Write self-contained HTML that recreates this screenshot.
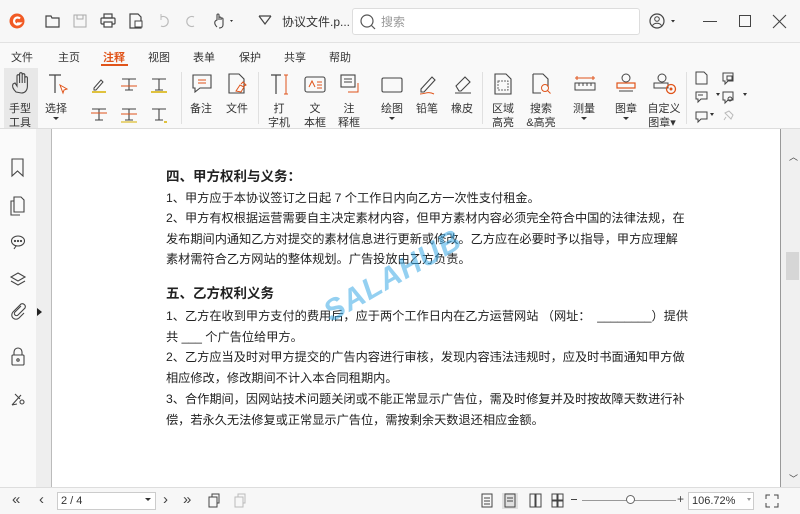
<!DOCTYPE html>
<html><head><meta charset="utf-8"><style>
*{margin:0;padding:0;box-sizing:border-box}
body{width:800px;height:514px;overflow:hidden;background:#f3f3f3;font-family:"Liberation Sans","Noto Sans CJK SC",sans-serif;position:relative;color:#333}
.a{position:absolute}
.t{position:absolute;font-size:11px;color:#333;white-space:nowrap;transform:translateX(-50%)}
.p{position:absolute;left:166px;font-size:12.2px;color:#222;white-space:nowrap;line-height:16px}
.h{font-weight:bold;font-size:13.5px}
svg{position:absolute;overflow:visible}
</style></head><body>
<div class="a" style="left:0;top:0;width:800px;height:42px;background:#f7f7f7"></div>
<div class="a" style="left:0;top:42px;width:800px;height:1px;background:#e2e2e2"></div>
<svg style="left:9px;top:13px" width="16" height="16"><circle cx="8" cy="8" r="7.5" fill="#f15a24"/><path d="M11 5.5A3.5 3.5 0 1 0 11 10.5H8" stroke="#fff" stroke-width="2.2" fill="none"/></svg>
<svg style="left:45px;top:14px" width="16" height="14"><path d="M1 2h5l1 2h7v9H1z" fill="none" stroke="#444" stroke-width="1.2"/></svg>
<svg style="left:73px;top:14px" width="14" height="14"><rect x="1" y="1" width="12" height="12" fill="none" stroke="#aaa"/><rect x="4" y="1" width="6" height="4" fill="none" stroke="#aaa"/></svg>
<svg style="left:100px;top:13px" width="16" height="15"><rect x="4" y="1" width="8" height="4" fill="none" stroke="#444" stroke-width="1.2"/><rect x="1" y="5" width="14" height="6" rx="1" fill="none" stroke="#444" stroke-width="1.2"/><rect x="4" y="9" width="8" height="5" fill="#fff" stroke="#444" stroke-width="1.2"/></svg>
<svg style="left:129px;top:13px" width="14" height="16"><path d="M1 1h8l3 3v11H1z" fill="none" stroke="#444" stroke-width="1.2"/><rect x="6" y="8" width="7" height="6" fill="#fff" stroke="#444"/></svg>
<svg style="left:157px;top:14px" width="12" height="14"><path d="M4 3a5 5 0 1 1 0 9" fill="none" stroke="#bbb" stroke-width="1.2"/><path d="M4 0v6" stroke="#bbb"/></svg>
<svg style="left:185px;top:14px" width="12" height="14"><path d="M9 3a5 5 0 1 0 0 9" fill="none" stroke="#bbb" stroke-width="1.2"/></svg>
<svg style="left:212px;top:12px" width="24" height="18"><path d="M5 15c-3-3-3-6 0-7V3a1 1 0 0 1 2 0v5M7 6a1 1 0 0 1 2 0v2M9 7a1 1 0 0 1 2 0v6c0 2-2 3-4 3" fill="none" stroke="#444" stroke-width="1.1"/><path d="M18 8l3 0-1.5 2z" fill="#333"/></svg>
<svg style="left:258px;top:15px" width="14" height="10"><path d="M1 1h12M1 1l6 8 6-8" fill="none" stroke="#444" stroke-width="1.2"/></svg>
<div class="a" style="left:282px;top:13px;font-size:12px;color:#333">协议文件.p...</div>
<div class="a" style="left:352px;top:8px;width:288px;height:27px;background:#fff;border:1px solid #ddd;border-radius:3px"></div>
<svg style="left:360px;top:14px" width="16" height="16"><circle cx="7" cy="7" r="6" fill="none" stroke="#555" stroke-width="1.2"/><path d="M11 11l4 4" stroke="#555" stroke-width="1.2"/></svg>
<div class="a" style="left:381px;top:13px;font-size:12px;color:#999">搜索</div>
<svg style="left:649px;top:13px" width="26" height="16"><circle cx="8" cy="8" r="7" fill="none" stroke="#444" stroke-width="1.2"/><circle cx="8" cy="6" r="2.3" fill="none" stroke="#444"/><path d="M3.5 12.5c2-3 7-3 9 0" fill="none" stroke="#444"/><path d="M22 7h4l-2 2.5z" fill="#333"/></svg>
<div class="a" style="left:703px;top:21px;width:14px;height:1px;background:#444"></div>
<div class="a" style="left:739px;top:15px;width:12px;height:12px;border:1.2px solid #444"></div>
<svg style="left:773px;top:15px" width="13" height="13"><path d="M0 0l13 13M13 0L0 13" stroke="#444" stroke-width="1.1"/></svg>
<div class="a" style="left:0;top:43px;width:800px;height:85px;background:#f9f9f9"></div>
<div class="t" style="left:22px;top:49px">文件</div>
<div class="t" style="left:69px;top:49px">主页</div>
<div class="t" style="left:114px;top:49px;color:#e0541a;font-weight:bold">注释</div>
<div class="a" style="left:101px;top:64px;width:27px;height:2px;background:#e0541a"></div>
<div class="t" style="left:159px;top:49px">视图</div>
<div class="t" style="left:204px;top:49px">表单</div>
<div class="t" style="left:250px;top:49px">保护</div>
<div class="t" style="left:295px;top:49px">共享</div>
<div class="t" style="left:340px;top:49px">帮助</div>
<div class="a" style="left:4px;top:68px;width:34px;height:60px;background:#e8e8e8"></div>
<svg style="left:11px;top:72px" width="22" height="22"><path d="M5 20c-3-3-4-6-3-8l2-1 2 3V4a1.3 1.3 0 0 1 2.6 0v7V2a1.3 1.3 0 0 1 2.6 0v9V3a1.3 1.3 0 0 1 2.6 0v8V6a1.3 1.3 0 0 1 2.6 0v8c0 4-2 7-6 7z" fill="none" stroke="#444" stroke-width="1.1"/></svg>
<div class="t" style="left:20px;top:100px">手型</div><div class="t" style="left:20px;top:114px">工具</div>
<svg style="left:47px;top:74px" width="22" height="22"><path d="M2 1h12M8 1v18" stroke="#444" stroke-width="1.2"/><path d="M13 11l7 4-3 1-1 3z" fill="#fff" stroke="#e0541a"/></svg>
<div class="t" style="left:56px;top:100px">选择</div><div class="a" style="left:53px;top:117px;border:3px solid transparent;border-top:3px solid #333"></div>
<svg style="left:92px;top:77px" width="14" height="16"><path d="M2 11l7-8 2 2-7 8H2z" fill="none" stroke="#444"/><path d="M0 15h14" stroke="#d8b000" stroke-width="1.5"/></svg>
<svg style="left:121px;top:77px" width="16" height="16"><path d="M1 2h14M8 2v11M4 13h8" stroke="#444" stroke-width="1.1"/><path d="M0 9h16" stroke="#e0541a"/></svg>
<svg style="left:151px;top:77px" width="16" height="16"><path d="M1 2h14M8 2v11M4 13h8" stroke="#444" stroke-width="1.1"/><path d="M0 15h16" stroke="#d8b000" stroke-width="1.5"/></svg>
<svg style="left:91px;top:107px" width="16" height="16"><path d="M1 2h14M8 2v11M4 13h8" stroke="#444" stroke-width="1.1"/><path d="M0 6h16" stroke="#e0541a"/></svg>
<svg style="left:121px;top:107px" width="16" height="16"><path d="M1 2h14M8 2v11M4 13h8" stroke="#444" stroke-width="1.1"/><path d="M0 7h16" stroke="#e0541a"/><path d="M0 15h16" stroke="#d8b000"/></svg>
<svg style="left:151px;top:107px" width="16" height="16"><path d="M1 2h14M8 2v11M4 13h8" stroke="#444" stroke-width="1.1"/><path d="M13 15h3" stroke="#d8b000" stroke-width="1.5"/></svg>
<div class="a" style="left:181px;top:72px;width:1px;height:52px;background:#e0e0e0"></div>
<svg style="left:192px;top:74px" width="20" height="20"><path d="M1 1h18v13H8l-5 4v-4H1z" fill="none" stroke="#444" stroke-width="1.1"/><path d="M6 6h8M6 9h8" stroke="#e0541a"/></svg>
<div class="t" style="left:201px;top:100px">备注</div>
<svg style="left:228px;top:73px" width="20" height="22"><path d="M1 1h10l5 5v14H1z" fill="none" stroke="#444" stroke-width="1.1"/><path d="M8 18l4-6 4 2-3 5zM13 11l2-2 3 3-2 1" fill="none" stroke="#e0541a"/></svg>
<div class="t" style="left:237px;top:100px">文件</div>
<div class="a" style="left:258px;top:72px;width:1px;height:52px;background:#e0e0e0"></div>
<svg style="left:270px;top:74px" width="20" height="22"><path d="M1 1h10M6 1v19" stroke="#444" stroke-width="1.2"/><path d="M16 1v19M14 1h4M14 20h4" stroke="#e0541a"/></svg>
<div class="t" style="left:279px;top:100px">打</div><div class="t" style="left:279px;top:114px">字机</div>
<svg style="left:304px;top:76px" width="22" height="18"><rect x="1" y="1" width="20" height="15" rx="2" fill="none" stroke="#444" stroke-width="1.1"/><path d="M5 11l3-6 3 6M13 6h5M13 9h5M13 12h5" fill="none" stroke="#e0541a"/></svg>
<div class="t" style="left:315px;top:100px">文</div><div class="t" style="left:315px;top:114px">本框</div>
<svg style="left:340px;top:74px" width="22" height="22"><rect x="1" y="1" width="14" height="12" fill="none" stroke="#444" stroke-width="1.1"/><path d="M4 5h8M4 8h8" stroke="#444"/><path d="M18 9v9H8" fill="none" stroke="#e0541a"/></svg>
<div class="t" style="left:349px;top:100px">注</div><div class="t" style="left:349px;top:114px">释框</div>
<svg style="left:381px;top:77px" width="22" height="16"><rect x="1" y="1" width="20" height="14" rx="1.5" fill="none" stroke="#444" stroke-width="1.1"/></svg>
<div class="t" style="left:392px;top:100px">绘图</div><div class="a" style="left:389px;top:117px;border:3px solid transparent;border-top:3px solid #333"></div>
<svg style="left:418px;top:74px" width="20" height="22"><path d="M3 15L14 3l3 3L6 18H3z" fill="none" stroke="#444" stroke-width="1.1"/><path d="M2 20c5 0 8-3 14 0" fill="none" stroke="#e0541a"/></svg>
<div class="t" style="left:427px;top:100px">铅笔</div>
<svg style="left:453px;top:74px" width="20" height="20"><path d="M3 12L12 3l5 5-9 9H6z" fill="none" stroke="#444" stroke-width="1.1"/><path d="M2 19h16" stroke="#444"/></svg>
<div class="t" style="left:462px;top:100px">橡皮</div>
<div class="a" style="left:482px;top:72px;width:1px;height:52px;background:#e0e0e0"></div>
<svg style="left:494px;top:73px" width="18" height="22"><path d="M1 1h11l5 5v15H1z" fill="none" stroke="#444" stroke-width="1.1"/><rect x="4" y="8" width="10" height="9" fill="none" stroke="#666" stroke-dasharray="2 1"/></svg>
<div class="t" style="left:503px;top:100px">区域</div><div class="t" style="left:503px;top:114px">高亮</div>
<svg style="left:532px;top:73px" width="20" height="22"><path d="M1 1h10l5 5v8M9 20H1V1" fill="none" stroke="#444" stroke-width="1.1"/><circle cx="13" cy="15" r="3.5" fill="none" stroke="#e0541a"/><path d="M15.5 17.5l3 3" stroke="#e0541a"/></svg>
<div class="t" style="left:541px;top:100px">搜索</div><div class="t" style="left:541px;top:114px">&amp;高亮</div>
<svg style="left:574px;top:76px" width="22" height="16"><path d="M1 2h20M3 0v4M19 0v4" stroke="#e0541a"/><rect x="1" y="7" width="20" height="7" fill="none" stroke="#444"/><path d="M5 7v3M9 7v3M13 7v3M17 7v3" stroke="#444"/></svg>
<div class="t" style="left:584px;top:100px">测量</div><div class="a" style="left:581px;top:117px;border:3px solid transparent;border-top:3px solid #333"></div>
<svg style="left:615px;top:73px" width="22" height="22"><circle cx="11" cy="5" r="4" fill="none" stroke="#444"/><rect x="2" y="10" width="18" height="5" fill="none" stroke="#e0541a" stroke-width="1.2"/><path d="M4 18h14" stroke="#444"/></svg>
<div class="t" style="left:626px;top:100px">图章</div><div class="a" style="left:623px;top:117px;border:3px solid transparent;border-top:3px solid #333"></div>
<svg style="left:653px;top:73px" width="24" height="22"><circle cx="9" cy="5" r="4" fill="none" stroke="#444"/><rect x="1" y="10" width="14" height="5" fill="none" stroke="#444"/><circle cx="18" cy="16" r="4.5" fill="none" stroke="#e0541a" stroke-width="1.3"/><circle cx="18" cy="16" r="1.5" fill="#e0541a"/></svg>
<div class="t" style="left:664px;top:100px">自定义</div><div class="t" style="left:662px;top:114px">图章▾</div>
<div class="a" style="left:686px;top:72px;width:1px;height:52px;background:#e0e0e0"></div>
<svg style="left:695px;top:71px" width="50" height="58" fill="none" stroke="#444" stroke-width="1"><path d="M1 1h8l3 3v9H1z"/><path d="M28 2h10v8h-5l-3 3v-3h-2z"/><rect x="32" y="5" width="5" height="4"/><path d="M1 21h11v7H6l-3 3v-3H1z"/><path d="M3 24h5"/><path d="M28 21h10v8h-5l-3 3v-3h-2z"/><circle cx="35" cy="28" r="2"/><path d="M1 41h11v7H6l-3 3v-3H1z"/><path d="M30 42l4-2 4 4-2 4zM31 46l-2 3" stroke="#bbb"/></svg>
<div class="a" style="left:716px;top:93px;border:2.5px solid transparent;border-top:3px solid #333"></div>
<div class="a" style="left:743px;top:93px;border:2.5px solid transparent;border-top:3px solid #333"></div>
<div class="a" style="left:710px;top:113px;border:2.5px solid transparent;border-top:3px solid #333"></div>
<div class="a" style="left:0;top:128px;width:800px;height:1px;background:#ddd"></div>
<div class="a" style="left:0;top:129px;width:36px;height:358px;background:#fafafa"></div>
<div class="a" style="left:36px;top:129px;width:16px;height:358px;background:#eeeeee"></div>
<div class="a" style="left:51px;top:129px;width:1px;height:358px;background:#bbb"></div>
<svg style="left:10px;top:158px" width="16" height="280" fill="none" stroke="#444" stroke-width="1.1">
<path d="M2 1h11v17l-5.5-5L2 18z"/>
<path d="M4 39h7l3 3v12H4z"/><path d="M4 43H1v14h9"/>
<ellipse cx="8" cy="83" rx="6.5" ry="5"/><path d="M6 88l-2 3"/><circle cx="5" cy="83" r=".6"/><circle cx="8" cy="83" r=".6"/><circle cx="11" cy="83" r=".6"/>
<path d="M8 115l7 4-7 4-7-4z"/><path d="M1 123l7 4 7-4"/>
<path d="M11 148l-6 6a2 2 0 0 0 3 3l7-7a3 3 0 0 0-4-4l-8 8a4 4 0 0 0 6 6l5-5"/>
<rect x="2" y="197" width="12" height="10" rx="1"/><path d="M4 197v-3a4 4 0 0 1 8 0v3"/><circle cx="8" cy="202" r="1.2"/>
<path d="M2 247l9-10M5 236l5 5M2 247l5-1"/><circle cx="12" cy="244" r="2"/>
</svg>
<div class="a" style="left:37px;top:308px;border:4px solid transparent;border-left:5px solid #222"></div>
<div class="a" style="left:52px;top:129px;width:730px;height:358px;background:#fff"></div>
<div class="p h" style="top:169px">四、甲方权利与义务：</div>
<div class="p" style="top:190px">1、甲方应于本协议签订之日起 7 个工作日内向乙方一次性支付租金。</div>
<div class="p" style="top:210px">2、甲方有权根据运营需要自主决定素材内容，但甲方素材内容必须完全符合中国的法律法规，在</div>
<div class="p" style="top:231px">发布期间内通知乙方对提交的素材信息进行更新或修改。乙方应在必要时予以指导，甲方应理解</div>
<div class="p" style="top:251px">素材需符合乙方网站的整体规划。广告投放由乙方负责。</div>
<div class="p h" style="top:286px">五、乙方权利义务</div>
<div class="p" style="top:308px">1、乙方在收到甲方支付的费用后，应于两个工作日内在乙方运营网站 （网址：&nbsp;&nbsp;________）提供</div>
<div class="p" style="top:329px">共 ___ 个广告位给甲方。</div>
<div class="p" style="top:349px">2、乙方应当及时对甲方提交的广告内容进行审核，发现内容违法违规时，应及时书面通知甲方做</div>
<div class="p" style="top:370px">相应修改，修改期间不计入本合同租期内。</div>
<div class="p" style="top:391px">3、合作期间，因网站技术问题关闭或不能正常显示广告位，需及时修复并及时按故障天数进行补</div>
<div class="p" style="top:412px">偿，若永久无法修复或正常显示广告位，需按剩余天数退还相应金额。</div>
<div class="a" style="left:318px;top:300px;font-size:30px;font-weight:bold;font-style:italic;color:rgba(60,170,230,.55);transform:rotate(-30deg);transform-origin:left top;letter-spacing:1px">SALAHUB</div>
<div class="a" style="left:780px;top:129px;width:1px;height:358px;background:#999"></div>
<div class="a" style="left:781px;top:129px;width:19px;height:358px;background:#f0f0f0"></div>
<div class="a" style="left:786px;top:252px;width:13px;height:28px;background:#d6d6d6"></div>
<div class="a" style="left:789px;top:150px;font-size:9px;color:#444">︿</div>
<div class="a" style="left:789px;top:472px;font-size:9px;color:#444">﹀</div>
<div class="a" style="left:0;top:487px;width:800px;height:27px;background:#f7f7f7;border-top:1px solid #ddd"></div>
<div class="a" style="left:12px;top:491px;font-size:15px;color:#444">«</div>
<div class="a" style="left:39px;top:491px;font-size:15px;color:#444">‹</div>
<div class="a" style="left:57px;top:492px;width:99px;height:18px;background:#fff;border:1px solid #ccc;font-size:11px;padding:2px 3px">2 / 4</div>
<div class="a" style="left:145px;top:498px;border:3px solid transparent;border-top:3px solid #333"></div>
<div class="a" style="left:163px;top:491px;font-size:15px;color:#444">›</div>
<div class="a" style="left:183px;top:491px;font-size:15px;color:#444">»</div>
<svg style="left:207px;top:493px" width="40" height="16" fill="none" stroke="#444"><rect x="2" y="4" width="8" height="10"/><path d="M5 4V1h7v9h-2"/><rect x="28" y="4" width="8" height="10" stroke="#bbb"/><path d="M31 4V1h7v9h-2" stroke="#bbb"/></svg>
<svg style="left:480px;top:493px" width="90" height="16" fill="none" stroke="#444"><rect x="2" y="1" width="10" height="13"/><path d="M4 5h6M4 8h6M4 11h6"/><rect x="22" y="0" width="16" height="16" fill="#e0e0e0" stroke="none"/><rect x="25" y="1" width="10" height="13"/><path d="M27 5h6M27 8h6"/><rect x="50" y="1" width="5" height="13"/><rect x="56" y="1" width="5" height="13"/><rect x="72" y="1" width="5" height="6"/><rect x="78" y="1" width="5" height="6"/><rect x="72" y="8" width="5" height="6"/><rect x="78" y="8" width="5" height="6"/></svg>
<div class="a" style="left:571px;top:499px;width:6px;height:1px;background:#444"></div>
<div class="a" style="left:582px;top:500px;width:94px;height:1px;background:#999"></div>
<div class="a" style="left:626px;top:495px;width:9px;height:9px;border:1px solid #666;border-radius:50%;background:#fff"></div>
<div class="a" style="left:677px;top:492px;font-size:12px;color:#444">+</div>
<div class="a" style="left:688px;top:492px;width:66px;height:18px;background:#fff;border:1px solid #ccc;font-size:11px;padding:2px 3px">106.72%</div>
<div class="a" style="left:747px;top:498px;border:2.5px solid transparent;border-top:3px solid #999"></div>
<svg style="left:765px;top:494px" width="14" height="14" fill="none" stroke="#444"><path d="M1 5V1h4M9 1h4v4M13 9v4H9M5 13H1V9"/></svg>
</body></html>
